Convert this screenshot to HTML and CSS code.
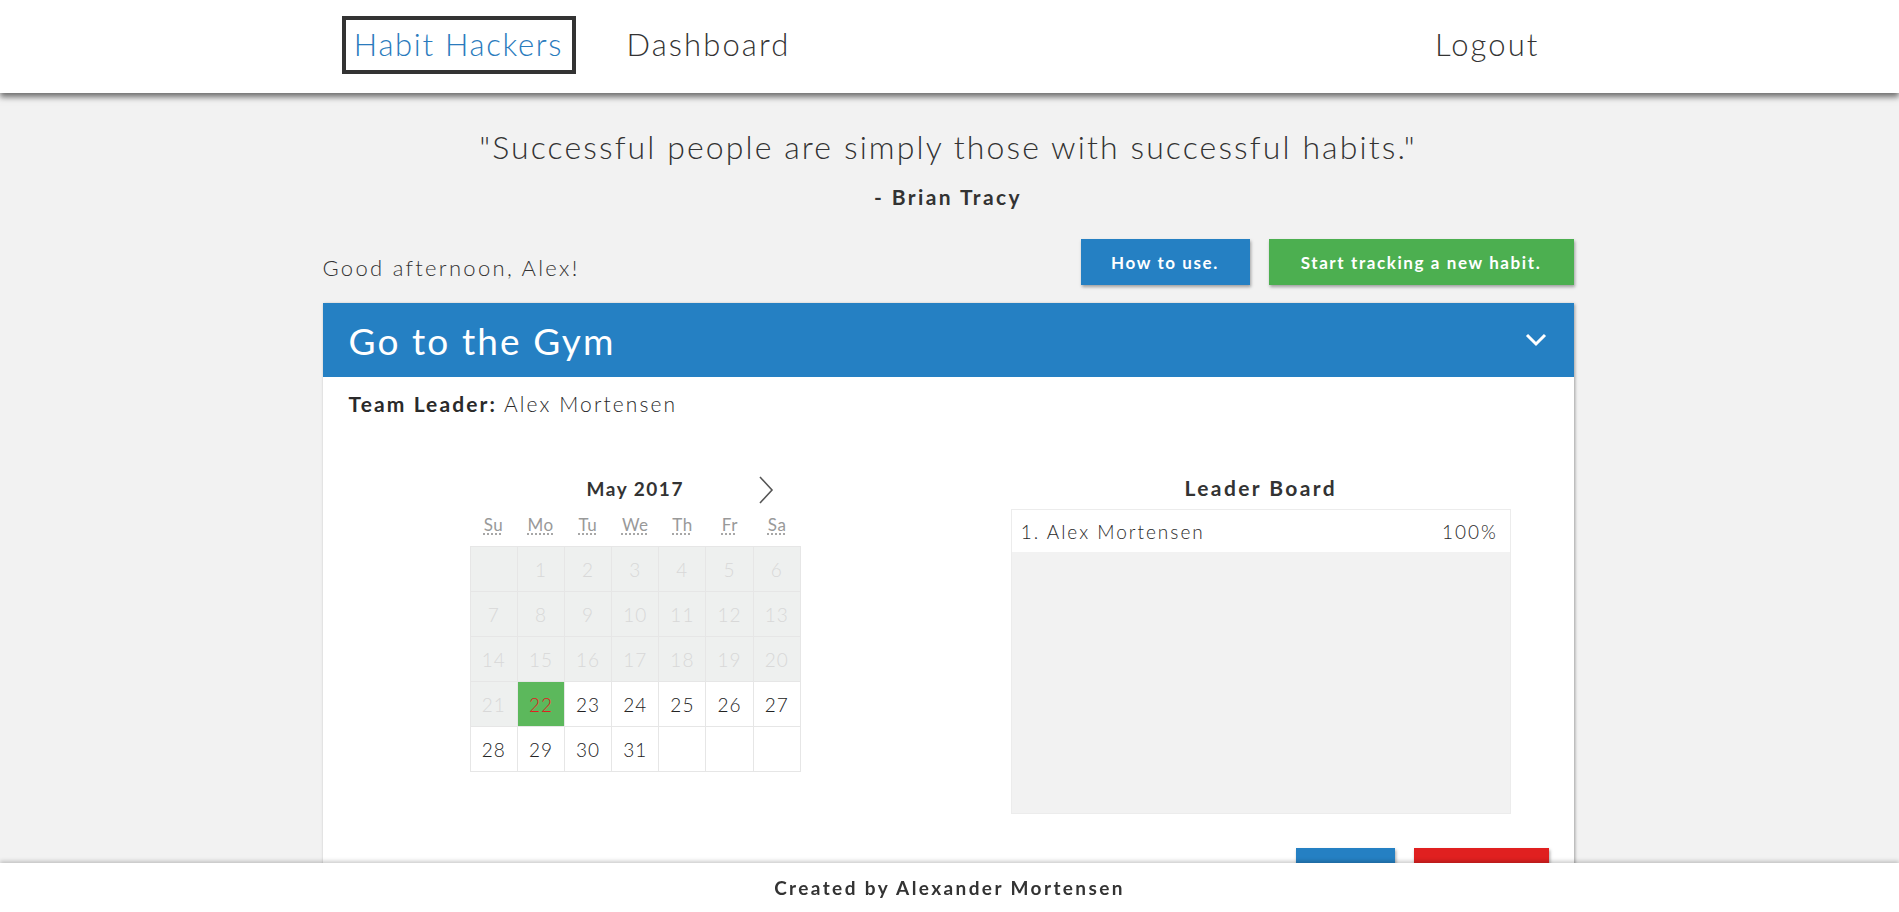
FILE: index.html
```html
<!DOCTYPE html>
<html lang="en">
<head>
<meta charset="utf-8">
<title>Habit Hackers</title>
<link rel="stylesheet" href="styles.css">
</head>
<body>
<nav class="navbar">
  <div class="container nav-inner">
    <a class="brand">Habit Hackers</a>
    <a class="nav-link">Dashboard</a>
    <a class="nav-link logout">Logout</a>
  </div>
</nav>

<main class="container">
  <section class="quote">
    <p class="quote-text">"Successful people are simply those with successful habits."</p>
    <p class="quote-author">- Brian Tracy</p>
  </section>

  <div class="greet-row">
    <span class="greeting">Good afternoon, Alex!</span>
    <div class="actions">
      <button class="btn btn-blue">How to use.</button>
      <button class="btn btn-green">Start tracking a new habit.</button>
    </div>
  </div>

  <article class="card">
    <header class="card-head">
      <h2 class="card-title">Go to the Gym</h2>
      <svg class="chev" width="22" height="14" viewBox="0 0 22 14"><polyline points="2,2 11,11 20,2" fill="none" stroke="#fff" stroke-width="3"/></svg>
    </header>
    <div class="card-body">
      <p class="leader"><b>Team Leader:</b> Alex Mortensen</p>
      <div class="cols">
        <div class="col">
          <div class="cal">
            <div class="cal-title">
              <span>May 2017</span>
              <svg class="cal-next" width="16" height="30" viewBox="0 0 16 30"><polyline points="2,2 14,15 2,28" fill="none" stroke="#555" stroke-width="1.6"/></svg>
            </div>
            <div class="cal-week">
              <abbr>Su</abbr><abbr>Mo</abbr><abbr>Tu</abbr><abbr>We</abbr><abbr>Th</abbr><abbr>Fr</abbr><abbr>Sa</abbr>
            </div>
            <div class="cal-grid">
              <span class="d past"></span><span class="d past">1</span><span class="d past">2</span><span class="d past">3</span><span class="d past">4</span><span class="d past">5</span><span class="d past">6</span>
              <span class="d past">7</span><span class="d past">8</span><span class="d past">9</span><span class="d past">10</span><span class="d past">11</span><span class="d past">12</span><span class="d past">13</span>
              <span class="d past">14</span><span class="d past">15</span><span class="d past">16</span><span class="d past">17</span><span class="d past">18</span><span class="d past">19</span><span class="d past">20</span>
              <span class="d past">21</span><span class="d done">22</span><span class="d">23</span><span class="d">24</span><span class="d">25</span><span class="d">26</span><span class="d">27</span>
              <span class="d">28</span><span class="d">29</span><span class="d">30</span><span class="d">31</span><span class="d"></span><span class="d"></span><span class="d"></span>
            </div>
          </div>
        </div>
        <div class="col">
          <div class="board">
            <h3 class="board-title">Leader Board</h3>
            <div class="board-box">
              <div class="board-row"><span>1. Alex Mortensen</span><span>100%</span></div>
            </div>
          </div>
        </div>
      </div>
      <div class="card-actions">
        <button class="btn btn-blue sq"></button>
        <button class="btn btn-red sq"></button>
      </div>
    </div>
  </article>
</main>

<footer class="footer">Created by Alexander Mortensen</footer>
</body>
</html>
```

FILE: styles.css
```css
* { box-sizing: border-box; }
html, body { margin: 0; padding: 0; }
body {
  background: #f2f2f2;
  font-family: "Lato", "Open Sans", sans-serif;
  color: #333;
  padding-bottom: 60px;
}
.container { width: 1251px; margin: 0 0 0 calc(50% - 627px); }

.navbar {
  background: #fff;
  height: 93px;
  box-shadow: 0 4px 6px rgba(0,0,0,0.55);
  position: relative;
  z-index: 2;
}
.nav-inner { display: flex; align-items: center; height: 93px; padding-bottom: 3px; }
.brand {
  margin-left: 19px;
  border: 4px solid #333;
  height: 58px;
  width: 234px;
  display: flex; align-items: center; justify-content: center;
  padding-bottom: 3px;
  color: #2a7bbd;
  font-size: 31px;
  font-weight: 300;
  letter-spacing: 1.7px;
}
.nav-link {
  margin-left: 51px;
  font-size: 31px;
  font-weight: 300;
  color: #333;
  letter-spacing: 2.1px;
  padding-bottom: 3px;
}
.logout { margin-left: auto; margin-right: 34px; }

.quote { text-align: center; padding-top: 35px; }
.quote-text {
  margin: 0;
  font-size: 32px;
  line-height: 38px;
  font-weight: 300;
  letter-spacing: 2.1px;
}
.quote-author {
  margin: 19px 0 0;
  font-size: 21px;
  line-height: 24px;
  font-weight: 700;
  letter-spacing: 2.4px;
}

.greet-row {
  display: flex;
  justify-content: space-between;
  align-items: flex-end;
  margin-top: 30px;
}
.greeting {
  font-size: 22px;
  line-height: 34px;
  font-weight: 300;
  letter-spacing: 2.3px;
}
.actions { display: flex; gap: 19px; }
.btn {
  border: 0;
  height: 46px;
  color: #fff;
  font-family: inherit;
  font-weight: 700;
  font-size: 17px;
  letter-spacing: 1.6px;
  box-shadow: 1px 2px 3px rgba(0,0,0,0.35);
  padding: 0;
}
.btn-blue { background: #2580c3; width: 169px; }
.btn-green { background: #4caf50; width: 305px; }
.btn-red { background: #e02020; }

.card {
  margin-top: 18px;
  background: #fff;
  box-shadow: 1px 1px 3px rgba(0,0,0,0.35);
}
.card-head {
  background: #2580c3;
  height: 74px;
  display: flex;
  align-items: center;
  justify-content: space-between;
  padding: 0 27px 0 26px;
}
.card-title {
  margin: 0;
  color: #fff;
  font-size: 37px;
  font-weight: 400;
  letter-spacing: 2.1px;
}
.chev { display: block; }
.card-body { padding: 14px 25px 40px 26px; }
.leader {
  margin: 0;
  font-size: 21px;
  line-height: 26px;
  font-weight: 300;
  letter-spacing: 2.1px;
  color: #2a2a2a;
}
.leader b { font-weight: 700; }

.cols { display: flex; margin: 53px -25px 0 -26px; }
.col { flex: 1; display: flex; justify-content: center; }

.cal { width: 331px; }
.cal-title {
  height: 36px;
  display: flex; align-items: center; justify-content: center;
  position: relative;
  font-weight: 700;
  font-size: 19px;
  letter-spacing: 1.5px;
}
.cal-next { position: absolute; left: 288px; top: 5px; }
.cal-week {
  display: grid;
  grid-template-columns: repeat(7, 1fr);
  height: 38px;
  padding-bottom: 2px;
  align-items: center;
  text-align: center;
}
.cal-week abbr {
  color: #999;
  font-size: 17px;
  letter-spacing: 0.5px;
  text-decoration: underline dotted #999;
  text-underline-offset: 3px;
}
.cal-grid {
  display: grid;
  grid-template-columns: repeat(7, 1fr);
  border-top: 1px solid #e6e6e6;
  border-left: 1px solid #e6e6e6;
  margin-top: 2px;
}
.d {
  height: 45px;
  border-right: 1px solid #e6e6e6;
  border-bottom: 1px solid #e6e6e6;
  display: flex; align-items: center; justify-content: center;
  font-size: 19px;
  font-weight: 300;
  letter-spacing: 1px;
  color: #222;
}
.d.past { background: #eef0ef; color: #d8d8d8; }
.d.done { background: #5cb85c; color: #e02020; }

.board { width: 500px; }
.board-title {
  margin: 0 0 3px;
  height: 36px;
  line-height: 36px;
  text-align: center;
  font-size: 21px;
  font-weight: 700;
  letter-spacing: 2.4px;
}
.board-box {
  height: 305px;
  background: #f2f2f2;
  border: 1px solid #ececec;
}
.board-row {
  background: #fff;
  height: 42px;
  display: flex; align-items: center; justify-content: space-between;
  padding: 0 12px 0 9px;
  font-size: 19px;
  font-weight: 300;
  letter-spacing: 2px;
  color: #2a2a2a;
}

.card-actions { display: flex; justify-content: flex-end; gap: 19px; margin-top: 34px; }
.sq { width: 99px; height: 46px; }
.btn-red.sq { width: 135px; }

.footer {
  position: fixed;
  left: 0; right: 0; bottom: 0;
  height: 49px;
  background: #fff;
  box-shadow: 0 -2px 4px rgba(0,0,0,0.2);
  display: flex; align-items: center; justify-content: center;
  font-weight: 700;
  font-size: 19px;
  letter-spacing: 2.4px;
  color: #333;
  z-index: 3;
}
```
